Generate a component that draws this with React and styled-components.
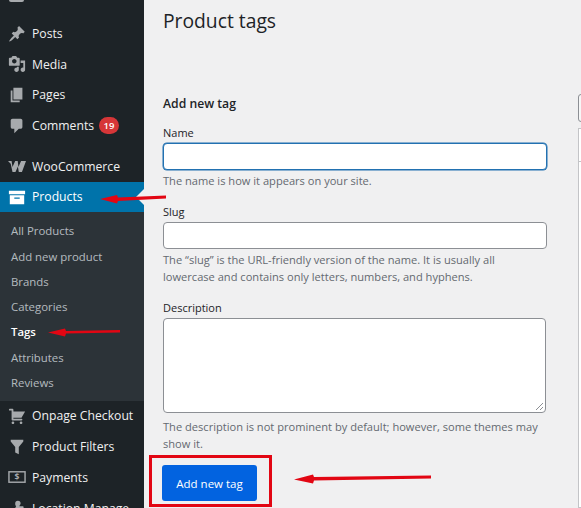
import React from "react";
import styled, { createGlobalStyle } from "styled-components";

const Global = createGlobalStyle`
  html, body { margin: 0; padding: 0; height: 508px; overflow: hidden; background: #f0f0f1; }
  body { font-family: "Open Sans", "Noto Sans", "Liberation Sans", sans-serif; }
  * { box-sizing: border-box; }
`;
const Page = styled.div`
  position: relative; display: flex; width: 581px; height: 508px; overflow: hidden; background: #f0f0f1;
`;
const Sidebar = styled.nav`
  width: 144px; flex: none; height: 508px; background: #1d2327; overflow: hidden;
  display: flex; flex-direction: column;
`;
const TopStub = styled.div`
  height: 18.2px; flex: none; padding-left: 9px;
`;
const StubBowl = styled.div`
  width: 15px; height: 2px; background: #a7aaad; border-radius: 0 0 8px 8px;
`;
const MenuRow = styled.div`
  height: 30.7px; flex: none; display: flex; align-items: center; gap: 6px; padding-left: 8px;
  color: ${p => p.$active ? "#fff" : "#f0f0f1"}; font-size: 12.2px;
  background: ${p => p.$active ? "#0073aa" : "transparent"};
  position: relative; white-space: nowrap;
`;
const Gap = styled.div`height: ${p => p.$h}px; flex: none;`;
const IconBox = styled.span`
  width: 18px; height: 18px; flex: none; display: flex; align-items: center; justify-content: center;
  color: ${p => p.$active ? "#fff" : "#a7aaad"};
`;
const Notch = styled.span`
  position: absolute; right: 0; top: 50%; margin-top: -8px; width: 0; height: 0;
  border-style: solid; border-width: 8px 8px 8px 0; border-color: transparent #f0f0f1 transparent transparent;
`;
const Badge = styled.span`
  display: inline-flex; align-items: center; justify-content: center; width: 20px; height: 17px;
  margin-left: -1px; border-radius: 9px; background: #d63638; color: #fff; font-size: 9.5px; font-weight: 600;
`;
const SubMenu = styled.div`
  background: #2c3338; height: 188.3px; flex: none; padding-top: 5.8px; display: flex; flex-direction: column;
`;
const SubItem = styled.div`
  height: 25.3px; flex: none; display: flex; align-items: center; padding-left: 11px; font-size: 11.4px;
  color: ${p => p.$current ? "#fff" : "rgba(240,246,252,.7)"};
  font-weight: ${p => p.$current ? 600 : 400};
`;
const Content = styled.main`
  flex: 1; padding: 6px 0 0 19px; color: #1d2327; position: relative; min-width: 0;
`;
const Title = styled.h1`
  margin: 0; font-size: 19.3px; font-weight: 400; line-height: 30px; color: #1d2327;
`;
const FormCol = styled.form`
  width: 384px; margin-top: 59px; display: flex; flex-direction: column;
`;
const Heading = styled.h2`
  margin: 0 0 11px; font-size: 12.2px; line-height: 18px; font-weight: 600; color: #1d2327;
`;
const Label = styled.label`
  display: block; font-size: 11px; line-height: 17px; color: #1d2327; margin-bottom: 2px;
`;
const TextInput = styled.div`
  width: ${p => p.$w || 384}px; height: ${p => p.$h || 27}px; background: #fff; border-radius: 4px;
  border: 1px solid ${p => p.$focus ? "#2271b1" : "#8c8f94"};
  box-shadow: ${p => p.$focus ? "0 0 0 .5px #2271b1" : "none"};
  position: relative; flex: none;
`;
const Grip = styled.svg`
  position: absolute; right: 1px; bottom: 1px; width: 9px; height: 9px;
`;
const Help = styled.p`
  margin: ${p => p.$mt ?? 2}px 0 0; font-size: 11.1px; line-height: 17px; color: #646970;
`;
const Button = styled.button`
  width: 95px; height: 36px; margin: 13px 0 0 -1px; border: none; border-radius: 3px; background: #0263e0; color: #fff;
  font: 400 11.5px "Open Sans", "Noto Sans", sans-serif; padding: 0; flex: none;
`;
const RightSelect = styled.div`
  position: absolute; left: 434px; top: 94px; width: 20px; height: 28px; background: #f6f7f7;
  border: 1px solid #8c8f94; border-radius: 3px;
`;
const RightTable = styled.div`
  position: absolute; left: 434px; top: 128px; width: 20px; height: 380px; background: #fff;
  border: 1px solid #c3c4c7; border-right: none;
`;
const TableRule = styled.div`
  height: 33px; border-bottom: 1px solid #c3c4c7;
`;
const Highlight = styled.div`
  position: absolute; left: 149px; top: 455px; width: 123px; height: 52px; border: 3px solid #e20613;
`;
const Overlay = styled.svg`
  position: absolute; left: 0; top: 0; width: 581px; height: 508px; pointer-events: none;
`;

const PostsIcon = () => <svg width="18" height="18" viewBox="0 0 20 20" fill="currentColor"><path d="M10.44 3.020l1.820-1.820 6.360 6.350-1.830 1.820c-1.050-.68-2.480-.57-3.410.36l-.75.75c-.92.93-1.040 2.350-.35 3.410l-1.830 1.820-2.410-2.410-2.800 2.790c-.42.42-3.380 2.710-3.800 2.290s1.860-3.390 2.280-3.810l2.790-2.790L4.100 9.360l1.830-1.820c1.050.69 2.480.57 3.400-.36l.75-.75c.93-.92 1.050-2.350.36-3.410z" /></svg>;
const MediaIcon = () => <svg width="18" height="18" viewBox="0 0 20 20" fill="currentColor"><path d="M13 11V4c0-.55-.45-1-1-1h-1.670L9 1H5L3.670 3H2c-.55 0-1 .45-1 1v7c0 .55.45 1 1 1h10c.55 0 1-.45 1-1zM7 4.500c1.380 0 2.500 1.120 2.500 2.500S8.380 9.500 7 9.500 4.500 8.380 4.500 7 5.620 4.500 7 4.500zM14 6h5v10.500c0 1.380-1.120 2.500-2.500 2.500S14 17.880 14 16.500s1.120-2.500 2.500-2.500c.17 0 .34.020.5.050V9h-3V6zm-4 8.050V13h2v3.500c0 1.380-1.120 2.500-2.500 2.500S7 17.880 7 16.500 8.120 14 9.500 14c.17 0 .34.020.5.050z" /></svg>;
const PagesIcon = () => <svg width="18" height="18" viewBox="0 0 20 20" fill="currentColor"><path d="M6 15V2h10v13H6zm-1 1h8v2H3V5h2v11z" /></svg>;
const CommentIcon = () => <svg width="18" height="18" viewBox="0 0 20 20" fill="currentColor"><path d="M5 2h9c1.100 0 2 .9 2 2v7c0 1.100-.9 2-2 2h-2l-5 5v-5H5c-1.100 0-2-.9-2-2V4c0-1.100.9-2 2-2z" /></svg>;
const WooIcon = () => <svg width="19" height="13" viewBox="0 0 20 14" fill="currentColor"><path d="M0 1h4l1 6.500L8 1h2.800l.8 6.500L14.500 1H20l-4.500 12h-3.500l-1-6-2.700 6H5L3 4z" /></svg>;
const ArchiveIcon = () => <svg width="18" height="18" viewBox="0 0 20 20" fill="currentColor"><path fillRule="evenodd" d="M19 3v4H1V3h18zM2 8h16v10H2V8zm5 2.500v1.500h6v-1.500H7z" /></svg>;
const CartIcon = () => <svg width="18" height="18" viewBox="0 0 20 20" fill="currentColor"><path d="M6 13h9c.55 0 1 .45 1 1s-.45 1-1 1H5c-.55 0-1-.45-1-1V4H2c-.55 0-1-.45-1-1s.45-1 1-1h3c.55 0 1 .45 1 1v2h13l-4 7H6v1zm-.5 3c.83 0 1.500.67 1.500 1.500S6.330 19 5.500 19 4 18.330 4 17.500 4.670 16 5.500 16zm9 0c.83 0 1.500.67 1.500 1.500s-.67 1.500-1.500 1.500-1.500-.67-1.500-1.500.67-1.500 1.500-1.500z" /></svg>;
const FilterIcon = () => <svg width="18" height="18" viewBox="0 0 20 20" fill="currentColor"><path d="M3 2h14v2l-5 6v8l-4-2v-6L3 4V2z" /></svg>;
const MoneyIcon = () => <svg width="19" height="14" viewBox="0 0 19 14" fill="none" stroke="currentColor"><rect x="1" y="1.500" width="17" height="11" strokeWidth="1.500" /><text x="9.500" y="10.500" fontSize="9" fontWeight="700" fill="currentColor" stroke="none" textAnchor="middle" fontFamily="Open Sans, sans-serif">$</text></svg>;
const PinIcon = () => <svg width="18" height="18" viewBox="0 0 20 20" fill="currentColor"><path d="M11 2a3 3 0 013 3c0 1-1 2-1.500 3H17l2 9H1l2-7h5l1-2c-1-1-1-2-1-3a3 3 0 013-3z" /></svg>;

const Item = ({ icon, children, active }) => (
  <MenuRow $active={active}>
    <IconBox $active={active}>{icon}</IconBox>
    {children}
    {active && <Notch />}
  </MenuRow>
);

export default function App() {
  return (
    <Page>
      <Global />
      <Sidebar>
        <TopStub><StubBowl /></TopStub>
        <Item icon={<PostsIcon />}>Posts</Item>
        <Item icon={<MediaIcon />}>Media</Item>
        <Item icon={<PagesIcon />}>Pages</Item>
        <Item icon={<CommentIcon />}>Comments <Badge>19</Badge></Item>
        <Gap $h={10} />
        <Item icon={<WooIcon />}>WooCommerce</Item>
        <Item icon={<ArchiveIcon />} active>Products</Item>
        <SubMenu>
          <SubItem>All Products</SubItem>
          <SubItem>Add new product</SubItem>
          <SubItem>Brands</SubItem>
          <SubItem>Categories</SubItem>
          <SubItem $current>Tags</SubItem>
          <SubItem>Attributes</SubItem>
          <SubItem>Reviews</SubItem>
        </SubMenu>
        <Item icon={<CartIcon />}>Onpage Checkout</Item>
        <Item icon={<FilterIcon />}>Product Filters</Item>
        <Item icon={<MoneyIcon />}>Payments</Item>
        <Item icon={<PinIcon />}>Location Manage</Item>
      </Sidebar>
      <Content>
        <Title>Product tags</Title>
        <FormCol>
          <Heading>Add new tag</Heading>
          <Label>Name</Label>
          <TextInput $focus />
          <Help>The name is how it appears on your site.</Help>
          <Gap $h={14} />
          <Label>Slug</Label>
          <TextInput />
          <Help>The “slug” is the URL-friendly version of the name. It is usually all lowercase and contains only letters, numbers, and hyphens.</Help>
          <Gap $h={14} />
          <Label>Description</Label>
          <TextInput $h={95} $w={383}>
            <Grip viewBox="0 0 9 9" stroke="#8c8f94"><path d="M1 8l7-7M5 8l3-3" /></Grip>
          </TextInput>
          <Help $mt={5}>The description is not prominent by default; however, some themes may show it.</Help>
          <Button type="button">Add new tag</Button>
        </FormCol>
        <RightSelect />
        <RightTable><TableRule /></RightTable>
      </Content>
      <Highlight />
      <Overlay viewBox="0 0 581 508" fill="#e20613">
        <path d="M100 199l17-4 1 2.500 48-2v3l-48 2.500-1 2.500z" />
        <path d="M48 332.500l17-4 1 2.500 54-1v2.500l-54 1-1 3z" />
        <path d="M294 479.500l19-5 1 2.500 117-1.500v3l-117 2-1 3z" />
      </Overlay>
    </Page>
  );
}
